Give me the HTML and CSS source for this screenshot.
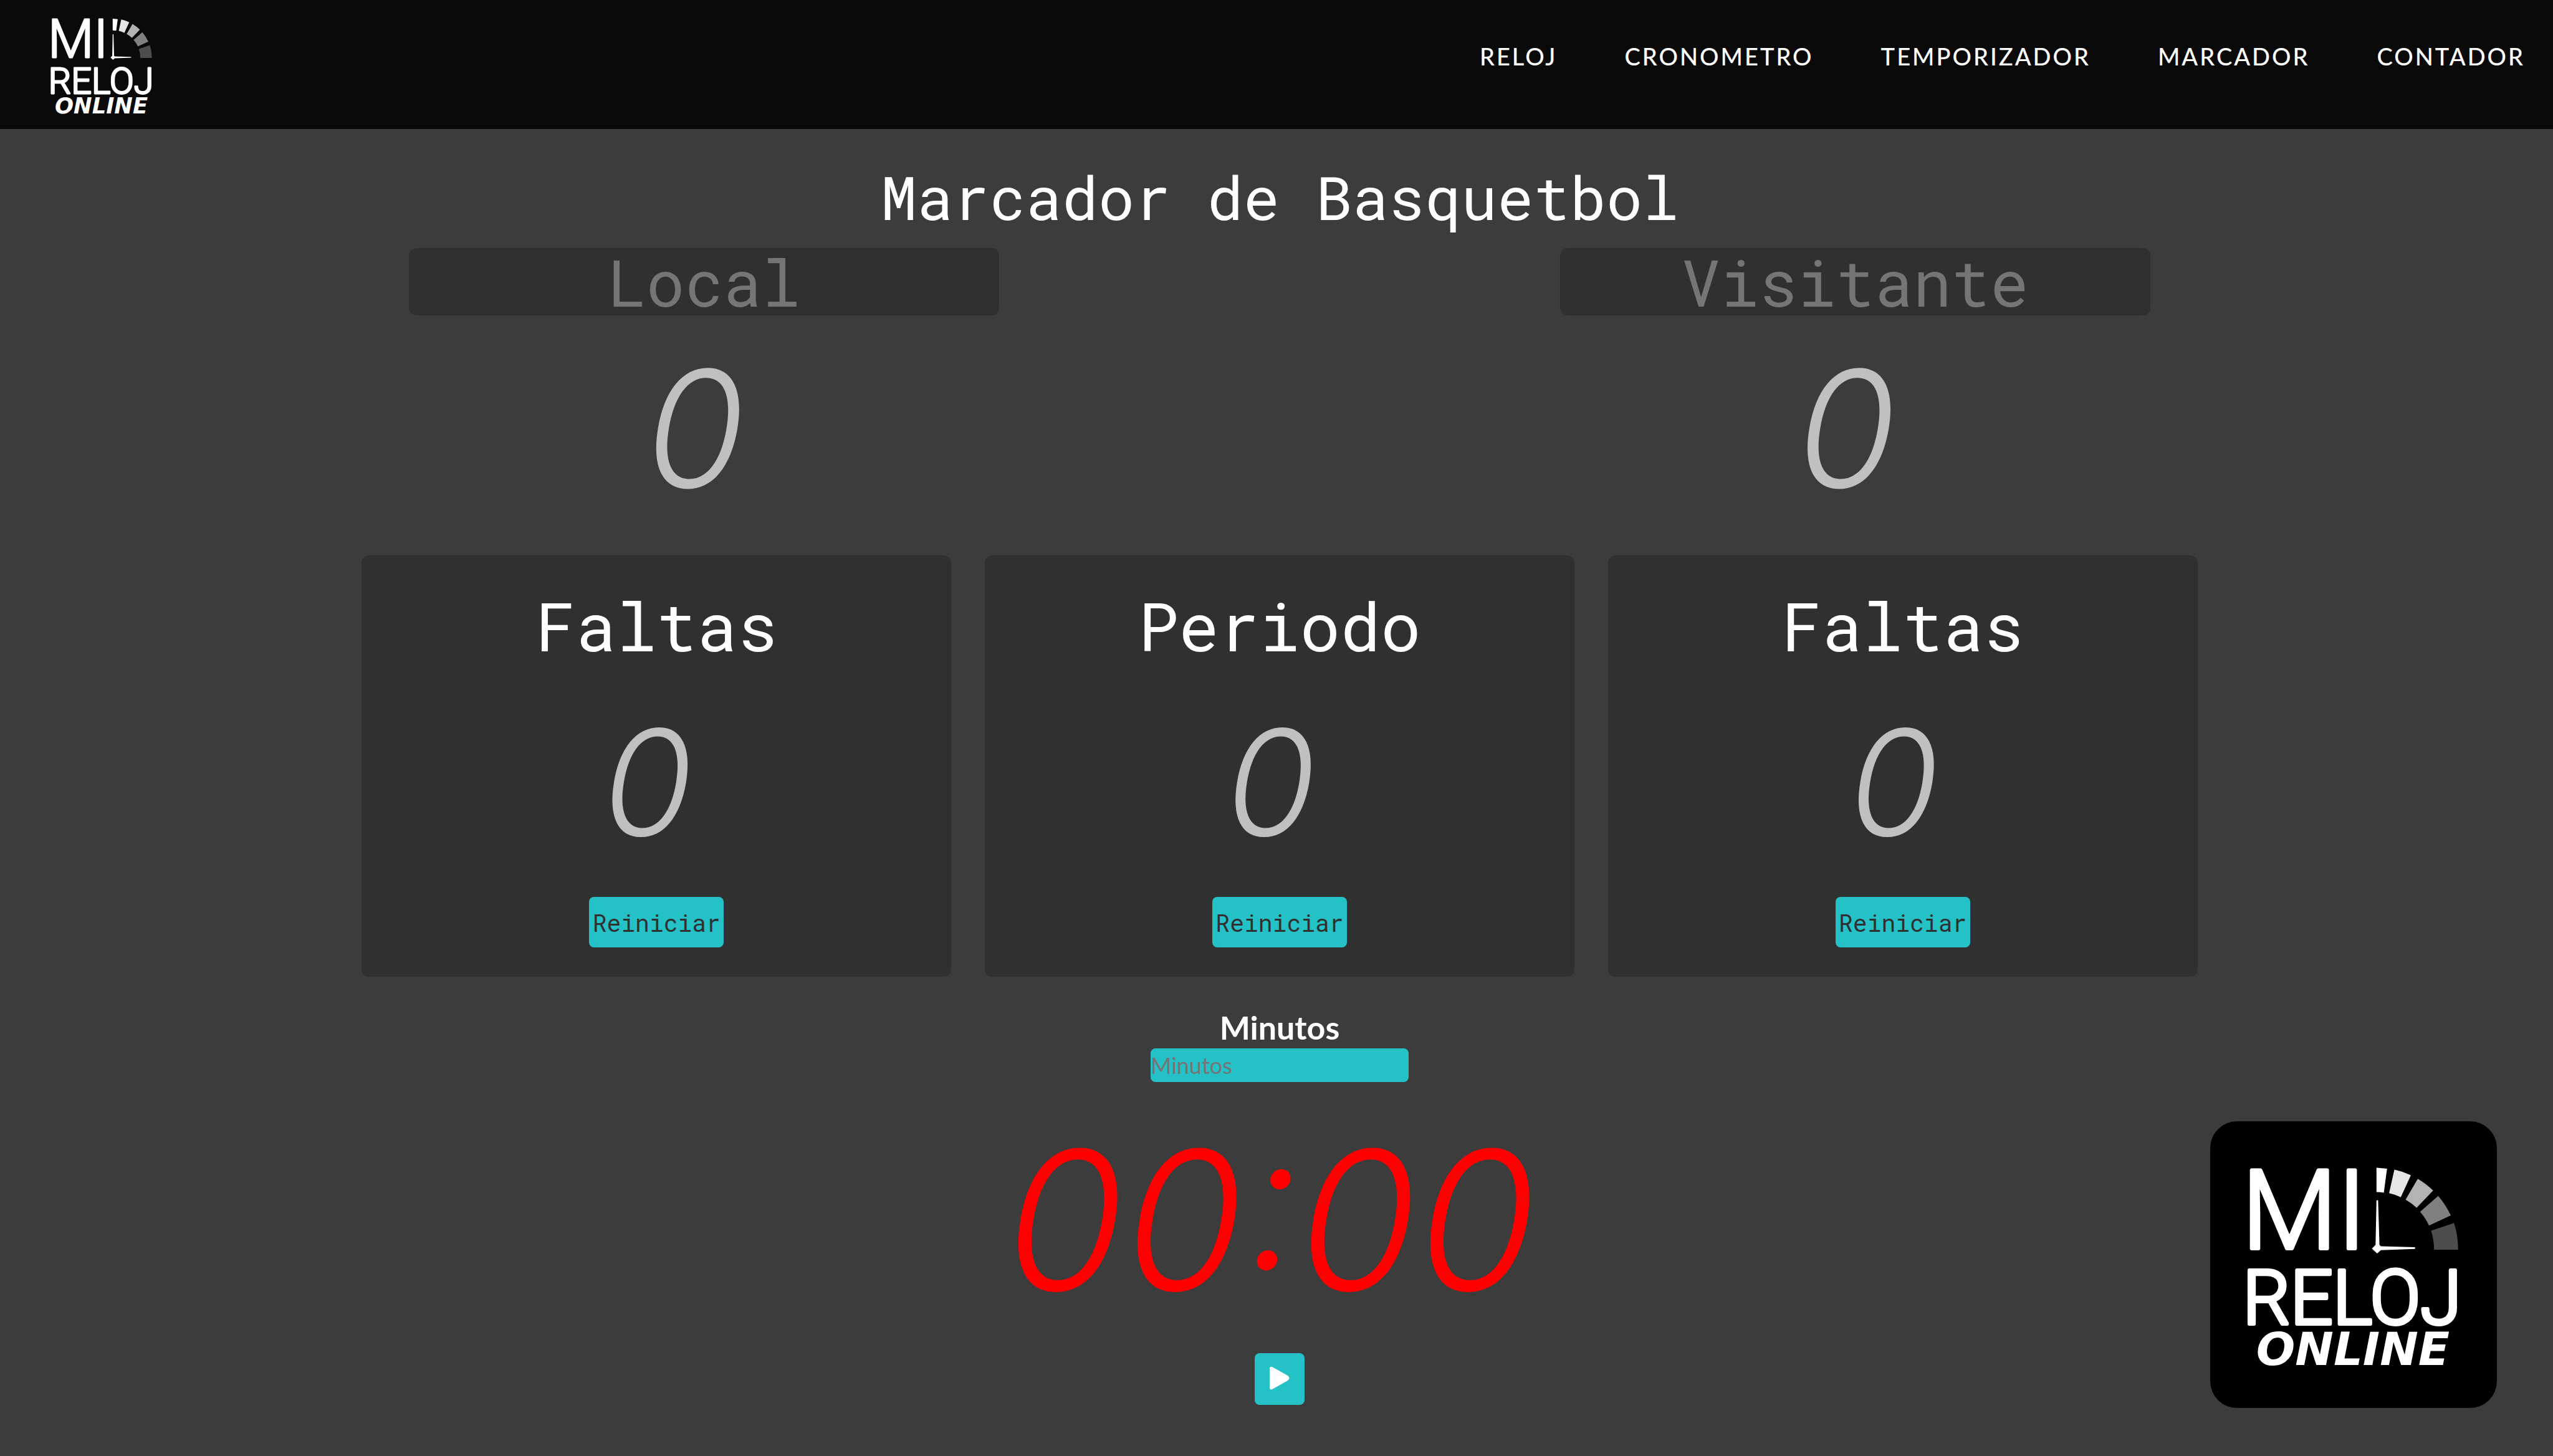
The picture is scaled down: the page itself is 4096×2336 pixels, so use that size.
FILE: index.html
```html
<!DOCTYPE html>
<html lang="es">
<head>
  <meta charset="utf-8">
  <meta name="viewport" content="width=device-width, initial-scale=1">
  <title>Marcador de Basquetbol</title>
  <link rel="stylesheet" href="styles.css">
</head>
<body>
  <svg class="defs" aria-hidden="true">
    <defs>
      <g id="brand">
        <g class="brand-text">
          <text x="138" y="555" font-size="480">MI</text>
          <text x="142" y="882" font-size="326">RELOJ</text>
        </g>
        <text class="brand-online" x="622" y="1062" font-size="200" text-anchor="middle">ONLINE</text>
        <g transform="translate(-76 -81) scale(1 .981)">
          <path fill="#fff" d="M801 289L847 293L833 400Q818 397 801 397Z"/>
          <path fill="#e6e6e6" d="M879 297Q916 305 951 322L907 420Q882 408 856 402Z"/>
          <path fill="#b3b3b3" d="M981 338Q1017 360 1048 390L976 467Q954 446 928 431Z"/>
          <path fill="#808080" d="M1070 414Q1103 453 1125 501L1030 546Q1015 512 991 485Z"/>
          <path fill="#4d4d4d" d="M1139 535Q1157 592 1157 653L1052 653Q1052 610 1039 569Z"/>
          <path fill="#fff" d="M801 434H808L814 632L820 638L969 642V650L820 655L804 670L781 648L797 632Z"/>
        </g>
      </g>
    </defs>
  </svg>

  <header class="site-header">
    <a class="logo" href="#" aria-label="Mi Reloj Online">
      <svg viewBox="150 180 960 900"><use href="#brand"/></svg>
    </a>
    <nav class="nav">
      <a href="#">RELOJ</a>
      <a href="#">CRONOMETRO</a>
      <a href="#">TEMPORIZADOR</a>
      <a href="#">MARCADOR</a>
      <a href="#">CONTADOR</a>
    </nav>
  </header>

  <main class="board">
    <h1 class="title">Marcador de Basquetbol</h1>

    <section class="teams">
      <div class="team">
        <input class="team-name" type="text" placeholder="Local" aria-label="Local">
        <output class="digits digits-score">0</output>
      </div>
      <div class="team">
        <input class="team-name" type="text" placeholder="Visitante" aria-label="Visitante">
        <output class="digits digits-score">0</output>
      </div>
    </section>

    <section class="cards">
      <article class="card">
        <h2 class="card-title">Faltas</h2>
        <output class="digits digits-card">0</output>
        <button class="reset" type="button">Reiniciar</button>
      </article>
      <article class="card">
        <h2 class="card-title">Periodo</h2>
        <output class="digits digits-card">0</output>
        <button class="reset" type="button">Reiniciar</button>
      </article>
      <article class="card">
        <h2 class="card-title">Faltas</h2>
        <output class="digits digits-card">0</output>
        <button class="reset" type="button">Reiniciar</button>
      </article>
    </section>

    <section class="timer">
      <label class="timer-label" for="minutes">Minutos</label>
      <input class="timer-input" id="minutes" type="text" placeholder="Minutos">
      <output class="digits digits-timer">00:00</output>
      <button class="play" type="button" aria-label="Iniciar">
        <svg viewBox="0 0 32 38"><path d="M0 4Q0 0 4 1L29 15Q34 19 29 23L4 37Q0 38 0 34Z"/></svg>
      </button>
    </section>
  </main>

  <a class="badge" href="#" aria-label="Mi Reloj Online">
    <svg viewBox="0 0 1250 1250"><use href="#brand"/></svg>
  </a>
</body>
</html>
```
FILE: styles.css
```css
* {
  box-sizing: border-box;
}

body {
  margin: 0;
  min-height: 100vh;
  background: #3c3c3c;
  color: #fff;
  font-family: Lato, sans-serif;
}

.defs {
  display: none;
}

/* Header */
.site-header {
  display: flex;
  justify-content: space-between;
  align-items: flex-start;
  height: 207px;
  padding: 26px 45px 0 79px;
  background: #0a0a0a;
}

.logo svg {
  display: block;
  width: 170px;
  height: 159px;
}

.nav {
  display: flex;
  gap: 108px;
  padding-top: 34px;
}

.nav a {
  color: #fff;
  font: 500 38px/60px Lato, sans-serif;
  letter-spacing: 3px;
  text-decoration: none;
}

/* Brand lettering */
.brand-text {
  fill: #fff;
  stroke: #fff;
  stroke-width: 16px;
  stroke-linejoin: round;
  font-family: Roboto, sans-serif;
  font-weight: 300;
}

.brand-online {
  fill: #fff;
  font-family: "DejaVu Sans", sans-serif;
  font-weight: 700;
  font-style: oblique;
}

/* Scoreboard */
.board {
  display: flex;
  flex-direction: column;
  align-items: center;
  padding: 43px 0 0 10px;
}

.title,
.card-title,
.team-name,
.reset {
  font-family: "Roboto Mono", "DejaVu Sans Mono", monospace;
  font-weight: 400;
}

.title {
  margin: 0 0 18px;
  font-size: 97px;
  line-height: 130px;
}

.teams {
  display: grid;
  grid-template-columns: 1fr 1fr;
  gap: 8px;
  width: 90vw;
}

.team {
  display: flex;
  flex-direction: column;
  align-items: center;
  gap: 52px;
}

.team-name {
  width: 947px;
  max-width: 100%;
  height: 108px;
  padding: 0;
  border: 0;
  border-radius: 12px;
  background: #303030;
  color: #fff;
  font-size: 103px;
  text-align: center;
}

.team-name::placeholder,
.timer-input::placeholder {
  color: #757575;
  opacity: 1;
}

.digits {
  padding-right: 28px;
  color: #c0c0c0;
  font-family: Inter, sans-serif;
  font-style: italic;
  font-weight: 300;
  line-height: 1;
}

.digits-score {
  font-size: 260px;
}

.cards {
  display: grid;
  grid-template-columns: repeat(3, 1fr);
  gap: 54px;
  width: 71.9vw;
  margin-top: 73px;
}

.card {
  display: flex;
  flex-direction: column;
  align-items: center;
  padding: 42px 0 47px;
  border-radius: 12px;
  background: #303030;
}

.card-title {
  margin: 0 0 64px;
  font-size: 108px;
  line-height: 140px;
}

.digits-card {
  margin-bottom: 66px;
  font-size: 236px;
}

.reset {
  width: 216px;
  height: 81px;
  padding: 0;
  border: 0;
  border-radius: 8px;
  background: #24c1c6;
  color: #303030;
  font-size: 38px;
}

/* Timer */
.timer {
  display: flex;
  flex-direction: column;
  align-items: center;
  margin-top: 49px;
}

.timer-label {
  margin-bottom: 2px;
  font-size: 52px;
  font-weight: 700;
  line-height: 64px;
}

.timer-input {
  width: 414px;
  height: 54px;
  padding: 0;
  border: 0;
  border-radius: 8px;
  background: #24c1c6;
  color: #303030;
  font: 400 36px/54px Lato, sans-serif;
}

.digits-timer {
  margin: 67px 0 58px;
  color: #f00;
  font-size: 310px;
}

.play {
  display: flex;
  justify-content: center;
  align-items: center;
  width: 80px;
  height: 83px;
  padding: 0 0 4px;
  border: 0;
  border-radius: 8px;
  background: #24c1c6;
}

.play svg {
  width: 32px;
  height: 38px;
  fill: #fff;
}

/* Floating badge */
.badge {
  position: fixed;
  right: 90px;
  bottom: 77px;
  width: 460px;
  height: 460px;
  border-radius: 43px;
  background: #000;
}

.badge svg {
  display: block;
  width: 100%;
  height: 100%;
}
```
